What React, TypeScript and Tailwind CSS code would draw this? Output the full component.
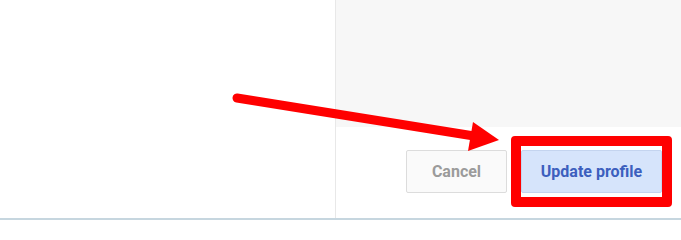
import React from 'react';

function Arrow() {
  return (
    <svg
      className="pointer-events-none absolute left-0 top-0"
      width="681"
      height="220"
      viewBox="0 0 681 220"
    >
      <line x1="237" y1="98" x2="474" y2="136" stroke="#ff0000" strokeWidth="9" strokeLinecap="round" />
      <polygon points="473,122 499,140 468,151" fill="#ff0000" />
    </svg>
  );
}

export default function App() {
  return (
    <div
      className="relative flex h-[220px] w-[681px] overflow-hidden border-b-2 border-[#c6d6df] bg-white"
      style={{ fontFamily: 'Roboto, "Liberation Sans", sans-serif' }}
    >
      <div className="w-[336px] shrink-0 border-r border-[#e8e8e8] bg-white" />
      <div className="flex min-w-0 flex-1 flex-col">
        <div className="h-[127px] bg-[#f7f7f7]" />
        <div className="flex items-start justify-end gap-[14px] pr-[19px] pt-[23px]">
          <button
            type="button"
            className="h-[43px] w-[101px] rounded-[2px] border border-[#dcdcdc] bg-[#fafafa] text-[16px] font-bold text-[#9b9b9b]"
          >
            Cancel
          </button>
          <div className="relative">
            <button
              type="button"
              className="h-[43px] w-[141px] rounded-[2px] border border-[#c4d4ef] bg-[#d6e4fb] text-[16px] font-bold text-[#3c5fbe]"
            >
              Update profile
            </button>
            <div className="pointer-events-none absolute -bottom-[14px] -left-[10px] -right-[10px] -top-[14px] rounded-[4px] border-[10px] border-[#ff0000]" />
          </div>
        </div>
      </div>
      <Arrow />
    </div>
  );
}
